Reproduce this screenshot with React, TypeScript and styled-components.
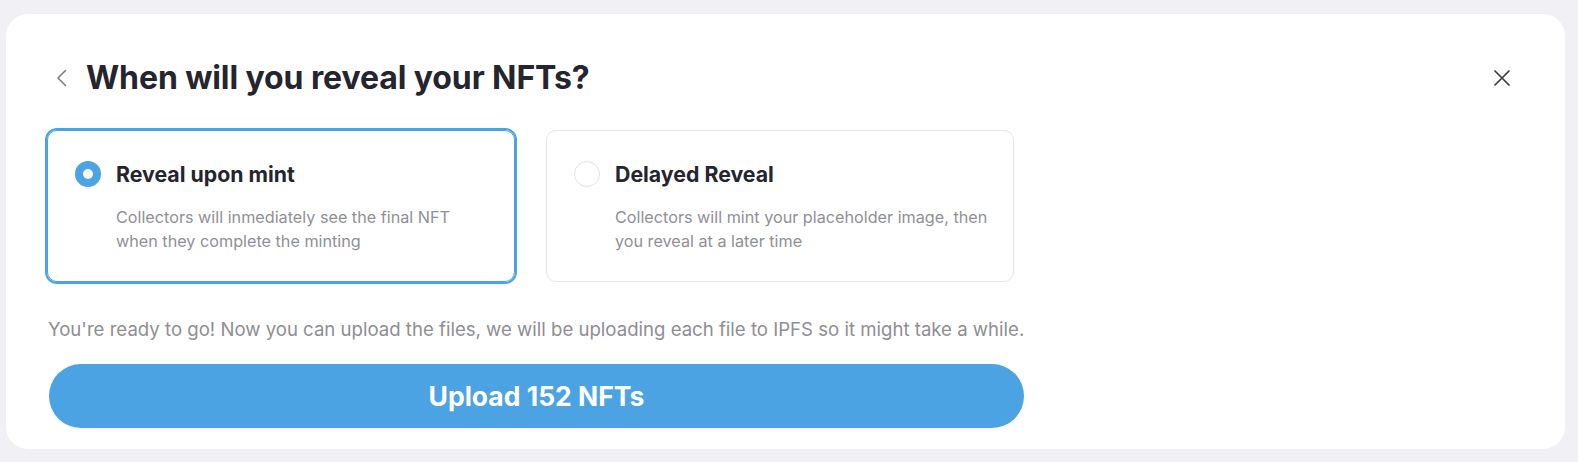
import React, { useState } from "react";
import styled, { createGlobalStyle } from "styled-components";

const GlobalStyle = createGlobalStyle`
  html, body { margin: 0; padding: 0; background: #f1f1f5; }
  body { font-family: Inter, "Noto Sans", sans-serif; -webkit-font-smoothing: antialiased; }
`;

const Page = styled.div`
  padding: 14px 13px 14px 6px;
`;

const Panel = styled.div`
  background: #ffffff;
  border-radius: 22px;
  padding: 46px 55px 21px 41px;
  display: flex;
  flex-direction: column;
`;

const Header = styled.div`
  display: flex;
  align-items: center;
  height: 36px;
`;

const BackButton = styled.button`
  border: 0;
  background: none;
  padding: 0;
  margin: 0 19px 0 9px;
  display: flex;
  align-items: center;
  color: #7c7c82;
  cursor: pointer;
`;

const Title = styled.h1`
  margin: 0;
  flex: 1;
  font-size: 32px;
  line-height: 36px;
  font-weight: 700;
  color: #25252f;
  letter-spacing: -0.1px;
`;

const CloseButton = styled.button`
  border: 0;
  background: none;
  padding: 0;
  display: flex;
  color: #3c3c42;
  cursor: pointer;
`;

const Options = styled.div`
  display: flex;
  gap: 31px;
  margin-top: 34px;
`;

const OptionCard = styled.div<{ $selected: boolean }>`
  width: 468px;
  box-sizing: border-box;
  height: 152px;
  border-radius: 10px;
  border: 1px solid ${(p) => (p.$selected ? "#4ba3e3" : "#e6e6ea")};
  box-shadow: ${(p) => (p.$selected ? "0 0 0 2px #4ba3e3" : "none")};
  padding: 29px 16px 0 27px;
  display: grid;
  grid-template-columns: 26px 1fr;
  column-gap: 15px;
  cursor: pointer;
`;

const Radio = styled.span<{ $selected: boolean }>`
  width: 26px;
  height: 26px;
  box-sizing: border-box;
  border-radius: 50%;
  margin-top: 1px;
  border: ${(p) => (p.$selected ? "8px solid #4ba3e3" : "1.5px solid #e2e2e6")};
  background: #fff;
`;

const OptionBody = styled.div`
  display: flex;
  flex-direction: column;
`;

const OptionTitle = styled.div`
  font-size: 21.3px;
  line-height: 28px;
  font-weight: 700;
  color: #25252f;
`;

const OptionDesc = styled.div`
  margin-top: 17px;
  font-size: 16.2px;
  line-height: 24px;
  color: #909096;
  white-space: nowrap;
`;

const Info = styled.p`
  margin: 34px 0 0 1px;
  font-size: 18.6px;
  line-height: 26px;
  color: #8e8e93;
`;

const UploadButton = styled.button`
  margin: 22px 0 0 2px;
  width: 975px;
  height: 64px;
  border: 0;
  border-radius: 32px;
  background: #4ba3e3;
  color: #fff;
  font-family: Inter, "Noto Sans", sans-serif;
  font-size: 26.5px;
  font-weight: 700;
  cursor: pointer;
`;

const options = [
  {
    id: "mint",
    title: "Reveal upon mint",
    desc: ["Collectors will inmediately see the final NFT", "when they complete the minting"],
  },
  {
    id: "delayed",
    title: "Delayed Reveal",
    desc: ["Collectors will mint your placeholder image, then", "you reveal at a later time"],
  },
];

export default function App() {
  const [selected, setSelected] = useState("mint");
  return (
    <>
      <GlobalStyle />
      <Page>
        <Panel>
          <Header>
            <BackButton aria-label="Back">
              <svg width="11" height="18" viewBox="0 0 11 18" fill="none">
                <path d="M9.5 1.5 L2 9 L9.5 16.5" stroke="currentColor" strokeWidth="1.6" strokeLinecap="round" strokeLinejoin="round" />
              </svg>
            </BackButton>
            <Title>When will you reveal your NFTs?</Title>
            <CloseButton aria-label="Close">
              <svg width="16" height="16" viewBox="0 0 16 16" fill="none">
                <path d="M1 1 L15 15 M15 1 L1 15" stroke="currentColor" strokeWidth="1.7" strokeLinecap="round" />
              </svg>
            </CloseButton>
          </Header>
          <Options>
            {options.map((o) => (
              <OptionCard key={o.id} $selected={selected === o.id} onClick={() => setSelected(o.id)}>
                <Radio $selected={selected === o.id} />
                <OptionBody>
                  <OptionTitle>{o.title}</OptionTitle>
                  <OptionDesc>
                    {o.desc[0]}
                    <br />
                    {o.desc[1]}
                  </OptionDesc>
                </OptionBody>
              </OptionCard>
            ))}
          </Options>
          <Info>
            You're ready to go! Now you can upload the files, we will be uploading each file to IPFS so it might take a while.
          </Info>
          <UploadButton>Upload 152 NFTs</UploadButton>
        </Panel>
      </Page>
    </>
  );
}
